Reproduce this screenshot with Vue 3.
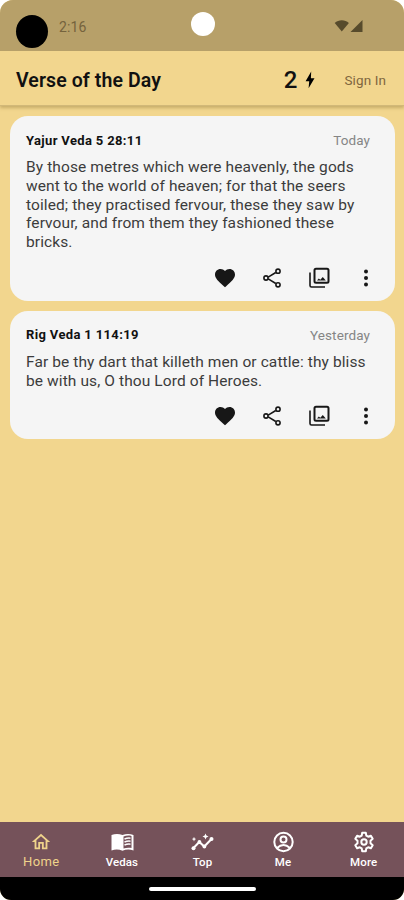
<script setup>
const verses = [
  {
    title: 'Yajur Veda 5 28:11',
    day: 'Today',
    lines: [
      'By those metres which were heavenly, the gods',
      'went to the world of heaven; for that the seers',
      'toiled; they practised fervour, these they saw by',
      'fervour, and from them they fashioned these',
      'bricks.',
    ],
  },
  {
    title: 'Rig Veda 1 114:19',
    day: 'Yesterday',
    lines: [
      'Far be thy dart that killeth men or cattle: thy bliss',
      'be with us, O thou Lord of Heroes.',
    ],
  },
]
const tabs = ['Home', 'Vedas', 'Top', 'Me', 'More']
</script>

<template>
  <div class="screen">
    <div class="status">
      <span class="dot"></span>
      <span class="clock">2:16</span>
      <span class="camera"></span>
      <svg class="signals" width="30" height="14" viewBox="0 0 30 14">
        <path d="M.7 3.9C4.6.2 11 .2 14.900 3.900L7.800 12.600z" />
        <path d="M28.500 1v12H16.500z" />
      </svg>
    </div>
    <header class="bar">
      <h1>Verse of the Day</h1>
      <span class="count">2</span>
      <svg class="bolt" width="10" height="18" viewBox="0 0 10 18">
        <path d="M6.200.4L.6 10.200H4.200L3.600 17.300L9.500 7.200H5.900z" />
      </svg>
      <span class="sign">Sign In</span>
    </header>
    <main>
      <article v-for="v in verses" :key="v.title" class="card">
        <div class="head">
          <h2>{{ v.title }}</h2>
          <span class="day">{{ v.day }}</span>
        </div>
        <p><span v-for="l in v.lines" :key="l" class="line">{{ l }}</span></p>
        <div class="actions">
          <svg viewBox="0 0 24 24"><path d="M12 21.350l-1.450-1.320C5.400 15.360 2 12.280 2 8.500 2 5.420 4.420 3 7.500 3c1.740 0 3.410.81 4.500 2.090C13.090 3.810 14.760 3 16.500 3 19.580 3 22 5.420 22 8.500c0 3.780-3.400 6.860-8.550 11.540z" /></svg>
          <svg viewBox="0 0 24 24" class="stroke share">
            <path d="M8.200 11.100l7.600-4.600M8.200 12.900l7.600 4.600" />
            <circle cx="18" cy="5.200" r="2.100" /><circle cx="6" cy="12" r="2.100" /><circle cx="18" cy="18.800" r="2.100" />
          </svg>
          <svg viewBox="0 0 24 24" class="stroke">
            <rect x="7.500" y="2.800" width="14" height="14" rx="1.500" />
            <path stroke-width="1.600" d="M3 6.500v13Q3 21 4.500 21H18" />
            <path class="solid" d="M10 14.600l1.800-2.100 1.500 1.300 2.500-2.800 3 3.600z" />
          </svg>
          <svg viewBox="0 0 24 24"><circle cx="12" cy="5.500" r="2" /><circle cx="12" cy="12" r="2" /><circle cx="12" cy="18.500" r="2" /></svg>
        </div>
      </article>
    </main>
    <nav>
      <div v-for="(t, i) in tabs" :key="t" class="tab" :class="{ active: i === 0 }">
        <svg v-if="i === 0" viewBox="0 0 24 24"><path d="M12 5.690l5 4.500V18h-2v-6H9v6H7v-7.810l5-4.500M12 3L2 12h3v8h6v-6h2v6h6v-8h3L12 3z" /></svg>
        <svg v-else-if="i === 1" viewBox="0 0 24 24">
          <path fill-rule="evenodd" d="M12.500 5C9 3.500 5 3.500 1.500 5v15.500c3.500-1.500 7.500-1.500 11 .3 3.500-1.800 7.500-1.800 11-.3V5c-3.500-1.500-7.500-1.500-11 0zm1 1.500c2.500-1 5.500-1.200 8-.5V18c-2.500-.6-5.500-.4-8 .6z" />
          <path class="rules" d="M14.500 9q3-1.200 6-.8M14.500 12q3-1.200 6-.8M14.500 15q3-1.200 6-.8" />
        </svg>
        <svg v-else-if="i === 2" viewBox="0 0 24 24">
          <path class="trend" d="M3.500 18l5.800-6 5 4.500L22 8.500" />
          <circle cx="3.500" cy="18.300" r="2" /><circle cx="9.400" cy="12" r="1.900" /><circle cx="14.400" cy="16.500" r="1.900" /><circle cx="21.500" cy="9" r="2" />
          <path d="M15.500 3.500l.9 2.100 2.100.9-2.100.9-.9 2.100-.9-2.100-2.100-.9 2.100-.9zM4 6.800l.7 1.600 1.600.7-1.600.7L4 11.400l-.7-1.600-1.600-.7 1.600-.7z" />
        </svg>
        <svg v-else-if="i === 3" viewBox="0 0 24 24" class="stroke">
          <circle cx="12.500" cy="12" r="9.200" /><circle cx="12.500" cy="9.500" r="3" /><path d="M6 18q6.500-6 13 0" />
        </svg>
        <svg v-else viewBox="0 0 24 24" class="stroke">
          <path stroke-linejoin="round" d="M10.200 2.800h3.600l.5 2.800 1.900 1.100 2.700-1 1.800 3.100-2.200 1.900v2.600l2.200 1.900-1.800 3.100-2.700-1-1.900 1.100-.5 2.800h-3.600l-.5-2.800-1.900-1.100-2.700 1-1.800-3.100 2.200-1.900v-2.600L3.300 8.800l1.800-3.100 2.700 1 1.900-1.100z" />
          <circle cx="12" cy="12" r="2.700" />
        </svg>
        <span>{{ t }}</span>
      </div>
    </nav>
    <footer><span></span></footer>
  </div>
</template>

<style>
body { margin: 0; background: #fff; }
</style>
<style scoped>
.screen { width: 404px; height: 900px; display: flex; flex-direction: column; overflow: hidden; border-radius: 13px 13px 11px 11px; background: #f2d68e; font-family: Roboto, sans-serif; color: #111; }
h1, h2, p { margin: 0; }
svg { display: block; fill: currentColor; }
.stroke { fill: none; stroke: currentColor; stroke-width: 2; }
.status { height: 51px; flex: none; background: #b7a069; position: relative; display: flex; align-items: flex-start; box-sizing: border-box; padding-left: 16px; }
.dot { width: 32px; height: 33px; border-radius: 50%; background: #000; margin-top: 15px; }
.clock { margin: 18px 0 0 11px; font-size: 14px; line-height: 18px; letter-spacing: .1px; color: #75633d; }
.camera { position: absolute; left: 191px; top: 12px; width: 24px; height: 24px; border-radius: 50%; background: #fff; }
.signals { margin: 19px 40px 0 auto; color: #574b2c; }
.bar { height: 55px; flex: none; display: flex; align-items: center; box-sizing: border-box; padding: 3px 18px 0 16px; border-bottom: 1px solid #d2b878; box-shadow: 0 2px 3px #a0854780; }
h1 { font-size: 19.500px; font-weight: 600; line-height: 24px; letter-spacing: .1px; padding-top: 2px; }
.count { margin-left: auto; font-size: 24px; font-weight: 500; line-height: 28px; }
.bolt { margin: 0 29px 0 8px; color: #000; }
.sign { font-size: 13.500px; color: #80663e; letter-spacing: .1px; white-space: nowrap; }
main { flex: 1; padding: 10px 9px 0 10px; display: flex; flex-direction: column; gap: 10px; }
.card { background: #f5f5f5; border-radius: 18px; padding: 15px 25px 11px 16px; }
.head { display: flex; justify-content: space-between; align-items: center; height: 18px; }
h2 { font-size: 13px; font-weight: 700; letter-spacing: .35px; }
.day { font-size: 13.500px; color: #858585; letter-spacing: .1px; }
p { margin-top: 9px; margin-right: -20px; color: #3c3c3c; font-size: 15.500px; line-height: 18.750px; letter-spacing: .1px; }
.line { display: block; white-space: nowrap; }
.actions { display: flex; justify-content: flex-end; gap: 23px; margin: 14px -8px 0 0; }
.actions svg { width: 24px; height: 24px; color: #171717; }
.stroke.share { stroke-width: 1.600; }
.solid { fill: currentColor; stroke: none; }
nav { height: 55px; flex: none; display: flex; background: #75525a; color: #fff; }
.tab { flex: 1; display: flex; flex-direction: column; align-items: center; padding-top: 8px; }
.tab svg { width: 24px; height: 24px; }
.tab span { font-size: 11.500px; line-height: 14px; margin-top: 1px; font-weight: 500; letter-spacing: .1px; }
.tab.active { color: #efd38b; padding-left: 1px; }
.tab.active svg { width: 22px; height: 24px; }
.tab.active span { font-size: 13px; font-weight: 400; letter-spacing: .4px; }
.rules { fill: none; stroke: currentColor; stroke-width: 1.500; }
.trend { fill: none; stroke: currentColor; stroke-width: 2; }
footer { height: 23px; flex: none; background: #000; display: flex; justify-content: center; align-items: center; }
footer span { width: 107px; height: 4px; border-radius: 2px; background: #fff; }
</style>
